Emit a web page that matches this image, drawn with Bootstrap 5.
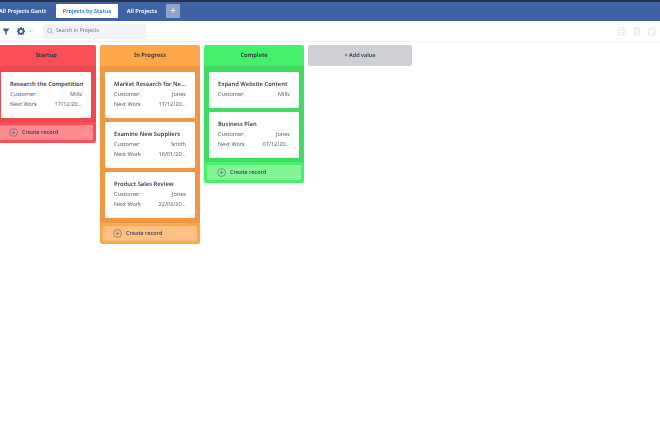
<!DOCTYPE html>
<html lang="en">
<head>
  <meta charset="UTF-8">
  <title>Projects by Status</title>
  <link href="https://cdn.jsdelivr.net/npm/bootstrap@5.3.0/dist/css/bootstrap.min.css" rel="stylesheet">
  <style>
    html, body { height: 100%; overflow: hidden; background: #fff; }
    body { font-family: "Noto Sans", sans-serif; font-size: 5.6px; color: #3c4257; text-rendering: geometricPrecision; }
    .top-tabs, .tool-row, .board { will-change: opacity; }
    .top-tabs { height: 21px; background: #3f62a3; border-top: 2px solid #24344f; }
    .top-tab { height: 14px; color: #fff; font-weight: 600; font-size: 5.6px; line-height: 14px; margin-top: 2px; white-space: nowrap; }
    .tab-first { margin-left: -1px; width: 57px; }
    .tab-on { width: 62px; background: #fff; color: #2f6fc4; text-align: center; border-radius: 1px; }
    .tab-plain { width: 48px; text-align: center; }
    .tab-add { width: 14px; height: 14px; margin-top: 2px; background: #8fa4c8; color: #dfe6f2; border-radius: 1px; text-align: center; line-height: 13px; font-size: 10px; font-weight: 600; }
    .tool-row { height: 21px; border-bottom: 1px solid #eef0f3; }
    .tool-left { padding-left: 3px; }
    .tool-search { width: 103px; height: 15px; margin-left: 10px; background: #f1f3f8; border-radius: 2px; color: #6b7285; font-size: 5.2px; padding-left: 4px; gap: 3px; }
    .tool-right { gap: 7px; padding-right: 4px; }
    .board { margin-left: -4px; margin-top: 3px; gap: 4px; }
    .lane { width: 100px; border-radius: 2px; }
    .lane-red { background: #fb4f57; }
    .lane-orange { background: #fea64a; }
    .lane-green { background: #46f06a; }
    .lane-title { height: 21px; line-height: 21px; text-align: center; font-weight: 600; font-size: 5.8px; color: #2c2f3a; }
    .lane-body { padding: 6px 5px 4px; display: flex; flex-direction: column; gap: 4px; }
    .lane-red .lane-body { background: #ee4850; }
    .lane-orange .lane-body { background: #ee9844; padding-bottom: 5px; }
    .lane-green .lane-body { background: #40dc61; }
    .rec {
      padding: 8px 9px 0; height: 46px; border-radius: 1px;
      background:
        linear-gradient(to top right, rgba(120,120,120,.1) 50%, transparent 50%) left bottom / 8px 4px no-repeat,
        linear-gradient(to top left, rgba(120,120,120,.1) 50%, transparent 50%) right bottom / 8px 4px no-repeat,
        #fff;
    }
    .rec-short { height: 36px; }
    .rec-name { font-weight: 600; font-size: 5.8px; color: #3a3f55; line-height: 9px; white-space: nowrap; }
    .rec-line { height: 10px; line-height: 10px; color: #5b6175; font-size: 5.5px; }
    .rec-line span:last-child { white-space: nowrap; }
    .make-rec { height: 15px; margin: 3px; border-radius: 1px; gap: 4px; padding-left: 10px; font-size: 5.6px; font-weight: 500; color: #3a3f55; }
    .lane-red .make-rec { background: #fd8a90; }
    .lane-orange .make-rec { background: #ffc183; }
    .lane-green .make-rec { background: #83f596; }
    .add-lane { width: 104px; height: 21px; line-height: 21px; text-align: center; background: #cfd0d6; border-radius: 2px; font-weight: 600; font-size: 5.5px; color: #3a3d48; }
  </style>
</head>
<body>
  <div class="top-tabs d-flex">
    <div class="top-tab tab-first">All Projects Gantt</div>
    <div class="top-tab tab-on">Projects by Status</div>
    <div class="top-tab tab-plain">All Projects</div>
    <div class="tab-add">+</div>
  </div>

  <div class="tool-row d-flex align-items-center justify-content-between">
    <div class="tool-left d-flex align-items-center">
      <svg width="6" height="7" viewBox="0 0 7 8"><path d="M0 .5h7v1.200L4.400 4.200V8L2.600 7V4.200L0 1.700z" fill="#3f5f8f"/></svg>
      <svg class="ms-2" width="8" height="8" viewBox="0 0 16 16"><path fill="#3f5f8f" fill-rule="evenodd" d="M6.600 0h2.800l.4 2.200 1.300.6L13 1.500l2 2-1.300 1.900.5 1.300 2.200.4v2.800l-2.200.4-.5 1.300 1.300 1.900-2 2-1.900-1.300-1.300.6-.4 2.200H6.600l-.4-2.200-1.300-.6L3 15.800l-2-2 1.300-1.900-.5-1.300L0 10.200V6.800l1.800-.4.500-1.300L1 3.500l2-2 1.900 1.300 1.300-.6zM8 5.500a3 3 0 1 0 0 6 3 3 0 0 0 0-6z"/></svg>
      <svg class="ms-1" width="4" height="4" viewBox="0 0 5 4"><path d="M.7 1l1.800 1.800L4.300 1" fill="none" stroke="#7d8cab" stroke-width=".8"/></svg>
      <div class="tool-search d-flex align-items-center">
        <svg width="6" height="6" viewBox="0 0 8 8"><circle cx="3.400" cy="3.400" r="2.700" fill="none" stroke="#8b93a5" stroke-width=".8"/><path d="M5.400 5.400L7.600 7.600" stroke="#8b93a5" stroke-width=".8"/></svg>
        <span>Search in Projects</span>
      </div>
    </div>
    <div class="tool-right d-flex align-items-center">
      <svg width="9" height="9" viewBox="0 0 10 10"><path d="M2.500 3.500V.8h5v2.700M2.500 7.500H.7V3.500h8.600v4H7.500M2.500 6h5v3.200h-5z" fill="none" stroke="#e3e6ec" stroke-width="1"/></svg>
      <svg width="8" height="9" viewBox="0 0 9 10"><path d="M.5 2h8M3 2V.7h3V2M1.500 2v7.300h6V2M3.500 3.500v4.500M5.500 3.500v4.500" fill="none" stroke="#e3e6ec" stroke-width="1"/></svg>
      <svg width="8" height="9" viewBox="0 0 9 10"><path d="M3 2.500V.7h3L8.300 3v4.500H6.800M.7 2.500h3.500L6.300 4.500v4.800H.7z" fill="none" stroke="#e3e6ec" stroke-width="1"/></svg>
    </div>
  </div>

  <div class="board d-flex align-items-start">
    <div class="lane lane-red">
      <div class="lane-title">Startup</div>
      <div class="lane-body">
        <div class="rec">
          <div class="rec-name">Research the Competition</div>
          <div class="rec-line d-flex justify-content-between"><span>Customer:</span><span>Mills</span></div>
          <div class="rec-line d-flex justify-content-between"><span>Next Work</span><span>17/12/20...</span></div>
        </div>
      </div>
      <div class="make-rec d-flex align-items-center">
        <svg width="9" height="9" viewBox="0 0 9 9"><circle cx="4.500" cy="4.500" r="3.900" fill="none" stroke="#6b6f86" stroke-width=".7"/><path d="M4.500 2.500v4M2.500 4.500h4" stroke="#6b6f86" stroke-width=".7"/></svg>
        <span>Create record</span>
      </div>
    </div>

    <div class="lane lane-orange">
      <div class="lane-title">In Progress</div>
      <div class="lane-body">
        <div class="rec">
          <div class="rec-name">Market Research for Ne...</div>
          <div class="rec-line d-flex justify-content-between"><span>Customer:</span><span>Jones</span></div>
          <div class="rec-line d-flex justify-content-between"><span>Next Work</span><span>17/12/20...</span></div>
        </div>
        <div class="rec">
          <div class="rec-name">Examine New Suppliers</div>
          <div class="rec-line d-flex justify-content-between"><span>Customer:</span><span>Smith</span></div>
          <div class="rec-line d-flex justify-content-between"><span>Next Work</span><span>10/01/20...</span></div>
        </div>
        <div class="rec">
          <div class="rec-name">Product Sales Review</div>
          <div class="rec-line d-flex justify-content-between"><span>Customer:</span><span>Jones</span></div>
          <div class="rec-line d-flex justify-content-between"><span>Next Work</span><span>22/03/20...</span></div>
        </div>
      </div>
      <div class="make-rec d-flex align-items-center">
        <svg width="9" height="9" viewBox="0 0 9 9"><circle cx="4.500" cy="4.500" r="3.900" fill="none" stroke="#6b6f86" stroke-width=".7"/><path d="M4.500 2.500v4M2.500 4.500h4" stroke="#6b6f86" stroke-width=".7"/></svg>
        <span>Create record</span>
      </div>
    </div>

    <div class="lane lane-green">
      <div class="lane-title">Complete</div>
      <div class="lane-body">
        <div class="rec rec-short">
          <div class="rec-name">Expand Website Content</div>
          <div class="rec-line d-flex justify-content-between"><span>Customer:</span><span>Mills</span></div>
        </div>
        <div class="rec">
          <div class="rec-name">Business Plan</div>
          <div class="rec-line d-flex justify-content-between"><span>Customer:</span><span>Jones</span></div>
          <div class="rec-line d-flex justify-content-between"><span>Next Work</span><span>07/12/20...</span></div>
        </div>
      </div>
      <div class="make-rec d-flex align-items-center">
        <svg width="9" height="9" viewBox="0 0 9 9"><circle cx="4.500" cy="4.500" r="3.900" fill="none" stroke="#6b6f86" stroke-width=".7"/><path d="M4.500 2.500v4M2.500 4.500h4" stroke="#6b6f86" stroke-width=".7"/></svg>
        <span>Create record</span>
      </div>
    </div>

    <div class="add-lane">+ Add value</div>
  </div>

  <script src="https://cdn.jsdelivr.net/npm/bootstrap@5.3.0/dist/js/bootstrap.bundle.min.js"></script>
</body>
</html>
